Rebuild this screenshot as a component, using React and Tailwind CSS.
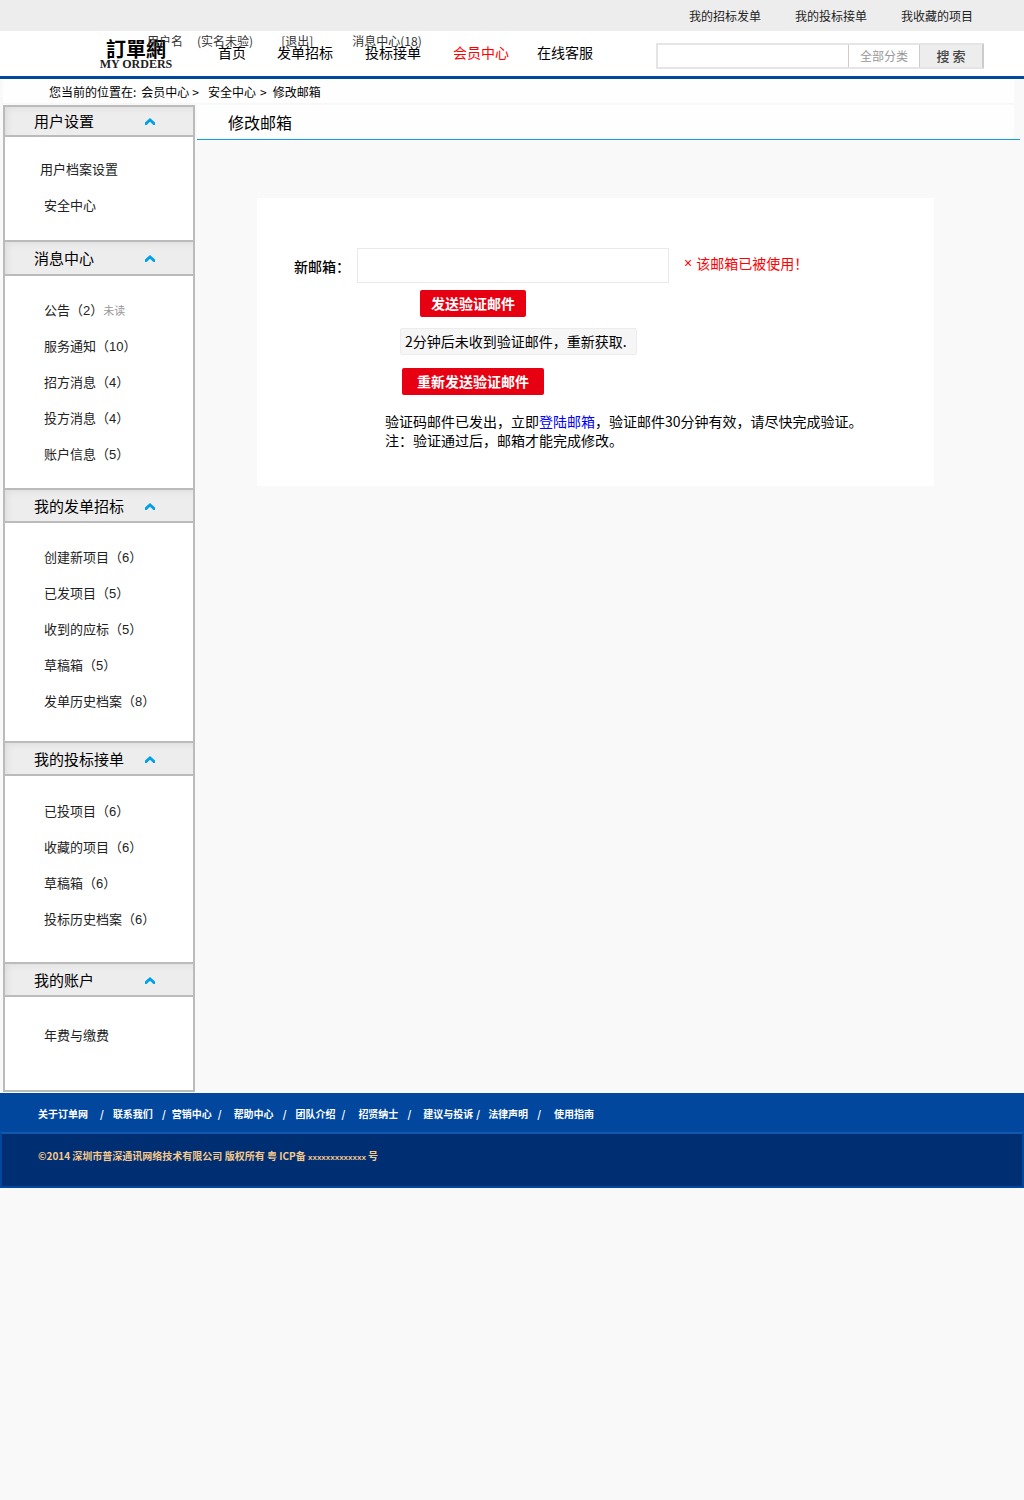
import React from "react";

const topLinks = ["我的招标发单", "我的投标接单", "我收藏的项目"];

const mainNav = [
  { label: "首页", gap: "", color: "text-black" },
  { label: "发单招标", gap: "ml-[31px]", color: "text-black" },
  { label: "投标接单", gap: "ml-8", color: "text-black" },
  { label: "会员中心", gap: "ml-8", color: "text-[#ff0000]" },
  { label: "在线客服", gap: "ml-7", color: "text-black" },
];

const sections = [
  {
    title: "用户设置",
    head: "h-8",
    body: "pt-[14px] pb-[17px]",
    items: [{ label: "用户档案设置", indent: "pl-[35px]" }, { label: "安全中心" }],
  },
  {
    title: "消息中心",
    head: "h-9",
    body: "pt-4 pb-4",
    items: [
      { label: "公告", count: 2, note: "未读" },
      { label: "服务通知", count: 10 },
      { label: "招方消息", count: 4 },
      { label: "投方消息", count: 4 },
      { label: "账户信息", count: 5 },
    ],
  },
  {
    title: "我的发单招标",
    head: "h-[35px]",
    body: "pt-4 pb-[22px]",
    items: [
      { label: "创建新项目", count: 6 },
      { label: "已发项目", count: 5 },
      { label: "收到的应标", count: 5 },
      { label: "草稿箱", count: 5 },
      { label: "发单历史档案", count: 8 },
    ],
  },
  {
    title: "我的投标接单",
    head: "h-[35px]",
    body: "pt-[17px] pb-[25px]",
    items: [
      { label: "已投项目", count: 6 },
      { label: "收藏的项目", count: 6 },
      { label: "草稿箱", count: 6 },
      { label: "投标历史档案", count: 6 },
    ],
  },
  {
    title: "我的账户",
    head: "h-[35px]",
    body: "pt-5 pb-[37px]",
    items: [{ label: "年费与缴费" }],
  },
];

const footerLinks = [
  { label: "关于订单网", sep: "pl-3 pr-[9px]" },
  { label: "联系我们", sep: "pl-[9px] pr-[6px]" },
  { label: "营销中心", sep: "pl-[6px] pr-3" },
  { label: "帮助中心", sep: "pl-[9px] pr-[9px]" },
  { label: "团队介绍", sep: "pl-[6px] pr-[13px]" },
  { label: "招贤纳士", sep: "pl-[9px] pr-3" },
  { label: "建议与投诉", sep: "pl-[3px] pr-2" },
  { label: "法律声明", sep: "pl-[9px] pr-[13px]" },
  { label: "使用指南" },
];

function Chevron() {
  return (
    <svg viewBox="0 0 10 7" className="h-[7px] w-[10px]" aria-hidden="true">
      <path d="M0 4.4 L5 0 L10 4.4 V7 H8.4 L5 3.8 L1.6 7 H0 Z" fill="#00a0e9" />
    </svg>
  );
}

function TopBar() {
  return (
    <nav className="flex h-[31px] items-center justify-end gap-[34px] bg-[#ededed] pr-[51px] text-xs text-[#222]">
      {topLinks.map((t) => (
        <a key={t} href="#">{t}</a>
      ))}
    </nav>
  );
}

function Header() {
  return (
    <header className="flex h-12 items-start border-b-[3px] border-[#00479d] bg-white">
      <a href="#" className="ml-[100px] flex w-[72px] shrink-0 flex-col items-center pt-[9px] whitespace-nowrap">
        <span className="font-['Noto_Sans_CJK_TC','Noto_Sans_CJK_SC',sans-serif] text-xl leading-[18px] font-bold text-black">訂單網</span>
        <span className="font-['Liberation_Serif',serif] text-xs leading-3 font-bold text-[#222]">MY ORDERS</span>
      </a>
      <div className="-ml-[25px] flex flex-col pt-1 whitespace-nowrap">
        <div className="flex text-xs leading-3 text-[#333]">
          <span>用户名</span>
          <span className="ml-[14px]">(实名未验)</span>
          <a href="#" className="ml-7">[退出]</a>
          <a href="#" className="ml-[39px]">消息中心(18)</a>
        </div>
        <nav className="ml-[71px] flex text-sm leading-[10px]">
          {mainNav.map((n) => (
            <a key={n.label} href="#" className={n.gap + " " + n.color}>{n.label}</a>
          ))}
        </nav>
      </div>
      <form className="mt-3 mr-10 ml-auto flex h-[26px] w-[328px] border-2 border-[#e5e5e5] border-r-[#ccc]">
        <input aria-label="关键字" className="min-w-0 flex-1 bg-white px-2 text-xs outline-none" />
        <button type="button" className="w-[72px] border-x border-[#ccc] bg-white text-xs text-[#999]">全部分类</button>
        <button type="button" className="w-[62px] bg-[#ededed] pb-px text-[13px] leading-5 font-medium text-[#444]">搜 索</button>
      </form>
    </header>
  );
}

function Breadcrumb() {
  return (
    <nav className="mr-[10px] ml-[3px] flex h-[25px] items-center border-b border-[#f7f7f7] bg-[#fefefe] pt-[2px] pl-[46px] text-xs whitespace-nowrap text-black">
      <span>您当前的位置在:</span>
      <a href="#" className="ml-[5px]">会员中心</a>
      <span className="ml-[3px]">&gt;</span>
      <a href="#" className="ml-[9px]">安全中心</a>
      <span className="ml-1">&gt;</span>
      <span className="ml-[6px]">修改邮箱</span>
    </nav>
  );
}

function Sidebar() {
  return (
    <aside className="ml-[3px] w-48 shrink-0 border-x-2 border-b-2 border-[#bbb] bg-white">
      {sections.map((s) => (
        <section key={s.title}>
          <h2 className={s.head + " border-y-2 border-[#bbb] bg-[#ededed] shadow-[inset_5px_4px_6px_-3px_#dcdcdc]"}>
            <button type="button" className="flex h-full w-full items-center justify-between pt-px pr-[38px] pl-[29px] text-[15px] text-black">
              {s.title}
              <Chevron />
            </button>
          </h2>
          <ul className={s.body}>
            {s.items.map((i) => (
              <li key={i.label} className={(i.indent || "pl-[39px]") + " h-9 text-[13px] leading-9 text-[#222]"}>
                <a href="#">
                  {i.label}
                  {i.count && (
                    <>
                      （<span className="font-['Liberation_Sans',sans-serif]">{i.count}</span>）
                    </>
                  )}
                  {i.note && <span className="text-[11px] text-[#999]">{i.note}</span>}
                </a>
              </li>
            ))}
          </ul>
        </section>
      ))}
    </aside>
  );
}

function EmailForm() {
  return (
    <form className="mt-[58px] mr-[90px] ml-[60px] bg-white pt-[50px] pb-9 text-sm text-black">
      <div className="flex items-center pl-[37px] whitespace-nowrap">
        <label htmlFor="email" className="w-[63px] font-medium">新邮箱：</label>
        <input id="email" type="email" className="h-[35px] w-[312px] border border-[#e9e9e9] bg-white px-2 outline-none" />
        <p className="ml-[15px] flex items-center gap-1 pb-[5px] text-[#ff0000]">
          <span className="font-['Liberation_Sans',sans-serif]">×</span>
          <span>该邮箱已被使用！</span>
        </p>
      </div>
      <div className="flex flex-col items-start">
        <button type="button" className="mt-[7px] ml-[163px] h-[27px] rounded-xs bg-[#e60012] px-[11px] pb-[2px] font-bold text-white">发送验证邮件</button>
        <p className="mt-[11px] ml-[143px] h-[27px] rounded-xs border border-[#ececec] bg-[#f6f6f6] pr-[9px] pl-1 leading-[25px]">2分钟后未收到验证邮件，重新获取.</p>
        <button type="button" className="mt-[13px] ml-[145px] h-[27px] rounded-xs bg-[#e60012] px-[15px] pb-[2px] font-bold text-white">重新发送验证邮件</button>
      </div>
      <p className="mt-[17px] ml-32 leading-[19px]">
        验证码邮件已发出，立即<a href="#" className="text-[#0000ff]">登陆邮箱</a>，验证邮件30分钟有效，请尽快完成验证。
        <br />
        注：验证通过后，邮箱才能完成修改。
      </p>
    </form>
  );
}

function Footer() {
  return (
    <footer className="mt-px font-bold whitespace-nowrap">
      <nav className="flex h-[39px] items-center bg-[#00479d] pt-[2px] pl-[38px] text-[10px] text-white">
        {footerLinks.map((l) => (
          <React.Fragment key={l.label}>
            <a href="#">{l.label}</a>
            {l.sep && <span className={l.sep}>/</span>}
          </React.Fragment>
        ))}
      </nav>
      <div className="h-14 border-2 border-[#00479d] border-t-[#1258ac] bg-[#002e73] pt-3 pl-9 text-[10px] leading-5 text-[#f5c98a]">
        ©2014 深圳市普深通讯网络技术有限公司 版权所有 粤 ICP备{" "}
        <span className="font-['Liberation_Sans',sans-serif] text-[8px]">xxxxxxxxxxxxx</span> 号
      </div>
    </footer>
  );
}

export default function App() {
  return (
    <div className="min-h-screen bg-[#f9f9f9] font-['Noto_Sans_CJK_SC',sans-serif]">
      <TopBar />
      <Header />
      <Breadcrumb />
      <div className="flex items-start pt-px">
        <Sidebar />
        <main className="ml-[2px] min-w-0 flex-1">
          <div className="mr-1 border-b border-[#129fe0]">
            <h1 className="mr-[6px] h-[34px] bg-[#fefefe] pl-[31px] text-base leading-[34px] text-black">修改邮箱</h1>
          </div>
          <EmailForm />
        </main>
      </div>
      <Footer />
    </div>
  );
}
